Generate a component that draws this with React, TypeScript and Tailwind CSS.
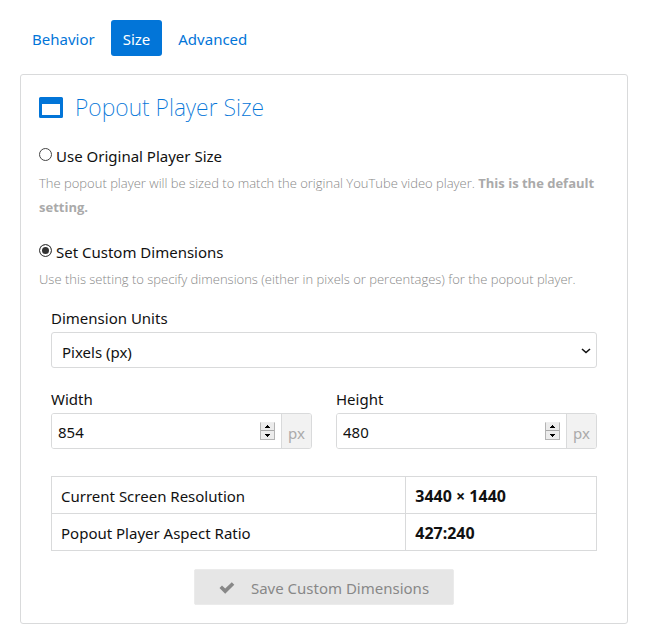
import { useState } from "react";

const tabs = ["Behavior", "Size", "Advanced"];

type DimensionFieldProps = {
  id: string;
  label: string;
  value: number;
  onChange: (value: number) => void;
};

function DimensionField({ id, label, value, onChange }: DimensionFieldProps) {
  return (
    <div className="min-w-0 flex-1">
      <label htmlFor={id} className="block leading-6">
        {label}
      </label>
      <div className="mt-0.5 flex h-9 overflow-hidden rounded-[3px] border border-[#d9dadb]">
        <input
          id={id}
          type="number"
          value={value}
          onChange={(event) => onChange(Number(event.target.value))}
          className="min-w-0 flex-1 appearance-none bg-white pt-0.5 pl-1.5 outline-none [appearance:textfield]"
        />
        <div className="mr-1.5 flex flex-col self-center border border-[#b4b4b4] border-t-[#eeeeee] bg-[#ececec]">
          <button
            type="button"
            aria-label={`Increase ${label}`}
            onClick={() => onChange(value + 1)}
            className="flex h-2 w-[13px] items-center justify-center border-b border-[#a8a8a8]"
          >
            <svg viewBox="0 0 5 3" className="h-[3px] w-[5px]" shapeRendering="crispEdges">
              <path d="M2 0h1v1h1v1h1v1H0V2h1V1h1z" />
            </svg>
          </button>
          <button
            type="button"
            aria-label={`Decrease ${label}`}
            onClick={() => onChange(value - 1)}
            className="flex h-2 w-[13px] items-center justify-center"
          >
            <svg viewBox="0 0 5 3" className="h-[3px] w-[5px]" shapeRendering="crispEdges">
              <path d="M0 0h5v1H4v1H3v1H2V2H1V1H0z" />
            </svg>
          </button>
        </div>
        <span className="flex w-[30px] items-center justify-center border-l border-[#d9dadb] bg-[#f2f2f2] pt-1 text-[#aaaaaa]">
          px
        </span>
      </div>
    </div>
  );
}

type SizeOptionProps = {
  id: string;
  label: string;
  checked: boolean;
  onChange: () => void;
  children: React.ReactNode;
};

function SizeOption({ id, label, checked, onChange, children }: SizeOptionProps) {
  return (
    <div>
      <div className="flex items-start gap-1 leading-6">
        <input
          id={id}
          type="radio"
          name="size"
          checked={checked}
          onChange={onChange}
          aria-describedby={`${id}-help`}
          className="mt-1 size-[13px] shrink-0 appearance-none rounded-full border border-[#444444] bg-white checked:bg-[#333333] checked:shadow-[inset_0_0_0_2px_white]"
        />
        <label htmlFor={id}>{label}</label>
      </div>
      <p id={`${id}-help`} className="mt-[3px] font-['Open_Sans',sans-serif] text-[13px] leading-6 font-light text-[#888888]">
        {children}
      </p>
    </div>
  );
}

export default function App() {
  const [activeTab, setActiveTab] = useState("Size");
  const [mode, setMode] = useState("custom");
  const [width, setWidth] = useState(854);
  const [height, setHeight] = useState(480);

  return (
    <main className="bg-white p-5 font-['Noto_Sans',sans-serif] text-[15px] text-[#111111]">
      <nav className="flex gap-1">
        {tabs.map((tab) => (
          <a
            key={tab}
            href={`#${tab.toLowerCase()}`}
            onClick={() => setActiveTab(tab)}
            className={
              tab === activeTab
                ? "rounded-[3px] bg-[#0275d8] px-3 pt-[7px] pb-[5px] leading-6 text-white"
                : "rounded-[3px] px-3 pt-[7px] pb-[5px] leading-6 text-[#0275d8]"
            }
          >
            {tab}
          </a>
        ))}
      </nav>

      <section className="mt-[18px] rounded-[3px] border border-[#d9dadb] px-[18px] pb-[18px]">
        <h1 className="flex items-center gap-3 pt-4 text-[23px] leading-8 font-extralight text-[#0275d8]">
          <svg viewBox="0 0 24 21" className="h-[21px] w-6" fill="currentColor" fillRule="evenodd" aria-hidden="true">
            <path d="M1.500 0h21A1.500 1.500 0 0 1 24 1.500v18a1.500 1.500 0 0 1-1.500 1.500h-21A1.500 1.500 0 0 1 0 19.500v-18A1.500 1.500 0 0 1 1.500 0zM3 7v11h18V7z" />
          </svg>
          Popout Player Size
        </h1>

        <div className="mt-[21px] space-y-[21px]">
          <SizeOption
            id="original"
            label="Use Original Player Size"
            checked={mode === "original"}
            onChange={() => setMode("original")}
          >
            The popout player will be sized to match the original YouTube video player.{" "}
            <strong className="font-bold text-[#aaaaaa]">This is the default setting.</strong>
          </SizeOption>
          <SizeOption
            id="custom"
            label="Set Custom Dimensions"
            checked={mode === "custom"}
            onChange={() => setMode("custom")}
          >
            Use this setting to specify dimensions (either in pixels or percentages) for the popout player.
          </SizeOption>
        </div>

        <div className="mt-[15px] px-3">
          <label htmlFor="units" className="block leading-6">
            Dimension Units
          </label>
          <div className="relative mt-0.5">
            <select
              id="units"
              className="block h-9 w-full appearance-none rounded-[3px] border border-[#d9dadb] bg-white pt-1 pl-2.5 outline-none"
            >
              <option>Pixels (px)</option>
              <option>Percentage (%)</option>
            </select>
            <svg
              viewBox="0 0 10 6"
              className="pointer-events-none absolute top-4 right-1.5 h-1.5 w-2.5"
              fill="none"
              stroke="currentColor"
              strokeWidth="1.6"
              aria-hidden="true"
            >
              <path d="M1 1l4 3.500L9 1" />
            </svg>
          </div>

          <div className="mt-[19px] flex gap-6">
            <DimensionField id="width" label="Width" value={width} onChange={setWidth} />
            <DimensionField id="height" label="Height" value={height} onChange={setHeight} />
          </div>

          <table className="mt-[27px] w-full border-collapse text-left">
            <tbody>
              <tr>
                <th scope="row" className="w-[65%] border border-[#d9dadb] px-[9px] pt-[7px] pb-[5px] leading-6 font-normal">
                  Current Screen Resolution
                </th>
                <td className="border border-[#d9dadb] px-[9px] pt-[7px] pb-[5px] text-base leading-6 font-bold">
                  3440 × 1440
                </td>
              </tr>
              <tr>
                <th scope="row" className="border border-[#d9dadb] px-[9px] pt-[7px] pb-[5px] leading-6 font-normal">
                  Popout Player Aspect Ratio
                </th>
                <td className="border border-[#d9dadb] px-[9px] pt-[7px] pb-[5px] text-base leading-6 font-bold">
                  427:240
                </td>
              </tr>
            </tbody>
          </table>

          <div className="mt-[18px] flex justify-center">
            <button
              type="button"
              disabled
              className="flex h-9 items-center gap-4 rounded-[2px] border border-[#ebebeb] bg-[#e6e6e6] px-6 pt-0.5 text-[#888888]"
            >
              <svg viewBox="0 0 16 12" className="h-3 w-4" fill="currentColor" aria-hidden="true">
                <path d="M0.500 6L3 3.500l3.200 3L12.800 0.300 15.300 2.800 6.200 11.700z" />
              </svg>
              Save Custom Dimensions
            </button>
          </div>
        </div>
      </section>
    </main>
  );
}
